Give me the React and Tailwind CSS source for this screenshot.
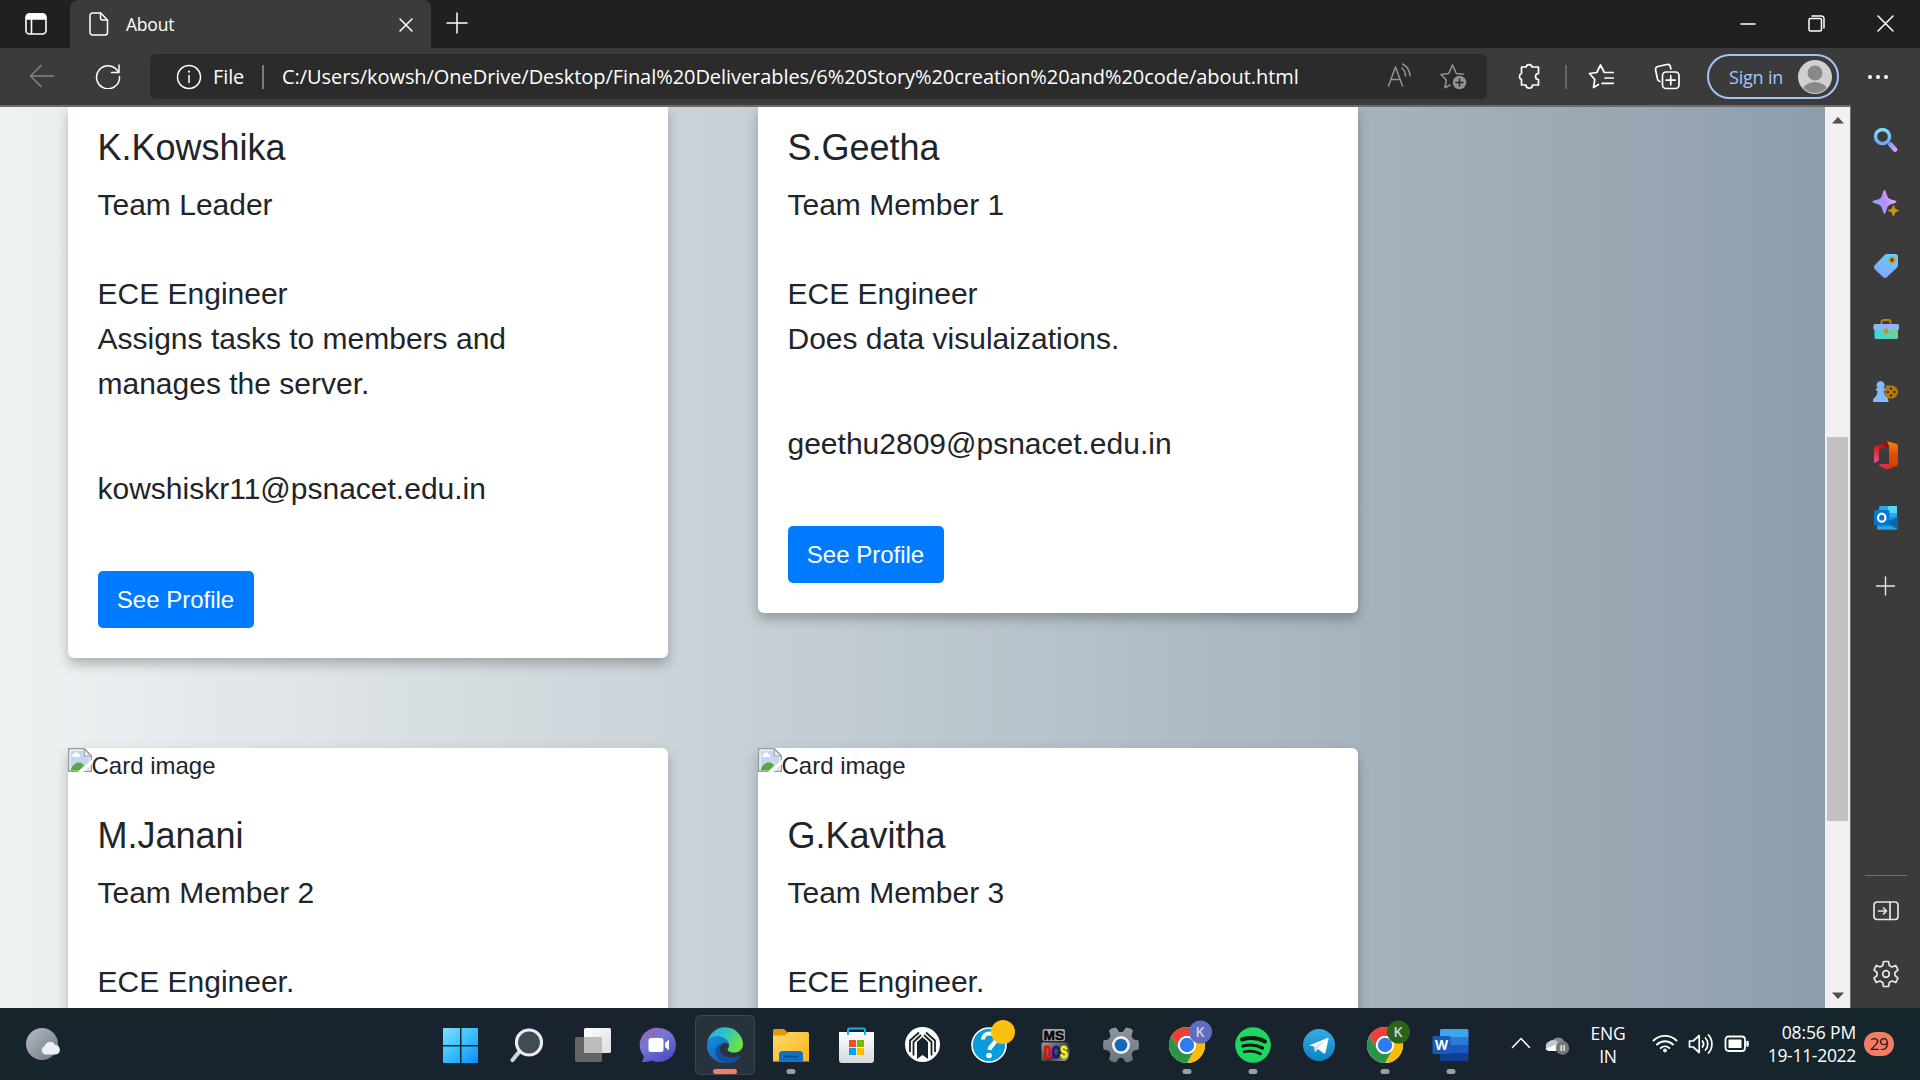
import React from 'react';

const UI = "font-['Open_Sans','Noto_Sans',sans-serif]";

function Line({ w = 24, h = 24, className = '', sw = 1.5, children }) {
  return (
    <svg
      width={w}
      height={h}
      viewBox={`0 0 ${w} ${h}`}
      fill="none"
      stroke="currentColor"
      strokeWidth={sw}
      strokeLinecap="round"
      strokeLinejoin="round"
      className={`block shrink-0 ${className}`}
    >
      {children}
    </svg>
  );
}

function TabStrip() {
  return (
    <div className="flex h-12 bg-[#202020] text-white">
      <div className="flex w-[70px] items-center pl-[25px]">
        <Line w={22} h={22} sw={1.6}>
          <rect x="1" y="1" width="20" height="20" rx="3.5" />
          <path d="M1.5 6V4a3 3 0 0 1 3-3h13a3 3 0 0 1 3 3v2z" fill="currentColor" />
          <path d="M6.5 6v14.5" />
        </Line>
      </div>
      <div className="flex h-12 w-[361px] items-center rounded-t-lg bg-[#3b3b3b] pl-[19px]">
        <Line w={20} h={24}>
          <path d="M3.5 1h8.2L18.5 8v12.5a2.5 2.5 0 0 1-2.500 2.500h-12.500a2.500 2.500 0 0 1-2.500-2.500v-17a2.500 2.500 0 0 1 2.500-2.500z" />
          <path d="M11.500 1v5a2 2 0 0 0 2 2h5" />
        </Line>
        <span className="-mt-px ml-[17px] w-[273px] text-[17.500px] leading-6 tracking-[-0.2px]">About</span>
        <Line w={14} h={14} className="mt-px">
          <path d="M1 1l12 12M13 1L1 13" />
        </Line>
      </div>
      <div className="flex flex-1 items-center pl-[15px]">
        <Line w={22} h={22} className="-mt-0.5">
          <path d="M11 1v20M1 11h20" />
        </Line>
      </div>
      <div className="flex items-center pr-[26px]">
        <Line w={16} h={16} className="-mt-px">
          <path d="M1 8h14" />
        </Line>
        <Line w={17} h={17} className="-mt-px ml-[52px]">
          <rect x="1" y="3.500" width="12.500" height="12.500" rx="1.500" />
          <path d="M4 1h9.500a2.500 2.500 0 0 1 2.500 2.500V13" />
        </Line>
        <Line w={17} h={17} className="-mt-px ml-[52px]">
          <path d="M1 1l15 15M16 1L1 16" />
        </Line>
      </div>
    </div>
  );
}

function Toolbar() {
  return (
    <div className="flex h-[57px] items-center bg-[#3b3b3b] text-white">
      <Line w={26} h={24} className="-mt-px ml-[29px] text-[#858585]">
        <path d="M24.500 12H1.500M12 1.500L1.500 12 12 22.500" />
      </Line>
      <Line w={26} h={26} className="-mt-px ml-[40px]" sw={1.5}>
        <path d="M23.500 9.500A11.500 11.500 0 1 0 24.500 13.500" />
        <path d="M24 2v7.500h-7.500" />
      </Line>
      <div className="ml-[29px] flex h-[45px] w-[1337px] items-center rounded-md bg-[#2b2b2b]">
        <Line w={26} h={26} className="ml-[26px]">
          <circle cx="13" cy="13" r="11.500" />
          <path d="M13 11.500v7" />
          <path d="M13 7.500v.3" strokeWidth="2" />
        </Line>
        <span className="ml-[11px] w-[49px] text-[20px] leading-7 tracking-[-0.1px]">File</span>
        <div className="h-6 w-0.5 bg-[#7d7d7d]" />
        <span className="ml-[18px] w-[1105px] whitespace-nowrap text-[20px] leading-7 tracking-[-0.06px]">
          C:/Users/kowsh/OneDrive/Desktop/Final%20Deliverables/6%20Story%20creation%20and%20code/about.html
        </span>
        <Line w={25} h={24} className="-mt-1 text-[#929292]">
          <path d="M1.500 23L8.500 4l7 19M4 16.500h9" />
          <path d="M15 5a11 11 0 0 1 3.500 8M15.500 1a14 14 0 0 1 7.500 12" />
        </Line>
        <Line w={27} h={27} className="ml-[28px] text-[#929292]" sw={1.6}>
          <path d="M10 22l-5 2.700 1.300-7.700L1 11.500l7.700-1L12.500 2l3.800 8.500 7.200.8" />
          <circle cx="19.500" cy="19.500" r="6.700" fill="currentColor" stroke="none" />
          <path d="M19.500 16v7M16 19.500h7" stroke="#2b2b2b" />
        </Line>
      </div>
      <Line w={26} h={28} className="-mt-px ml-[29px]" sw={1.7}>
        <path d="M5.500 5H10a3.200 3.200 0 0 1 6.200 0h6.300v6.500a3 3 0 0 0 0 6V23h-6a3.200 3.200 0 0 1-6.500 0H5.500v-5.500a3.200 3.200 0 0 1 0-6z" />
      </Line>
      <div className="ml-[23px] h-6 w-0.5 bg-[#666]" />
      <Line w={27} h={26} className="-mt-px ml-[21px]" sw={1.7}>
        <path d="M10.500 21.500l-5 3 1.300-8L1.500 10.500l7.300-1L12.500 2l3.800 7.500h9M17 15h8.300M14 20.300h11.300" />
      </Line>
      <Line w={27} h={27} className="ml-[39px]" sw={1.7}>
        <path d="M6 18.500a3 3 0 0 1-2.500-2.500L1.600 7a3 3 0 0 1 2.300-3.500l9-2a3 3 0 0 1 3.500 2.300l.5 2.200" />
        <rect x="8.500" y="9" width="16.500" height="16.500" rx="3.500" />
        <path d="M16.750 12.700v9M12.200 17.200h9" />
      </Line>
      <div className="ml-[26px] flex h-[45px] w-[132px] items-center rounded-full border-2 border-[#a5c3f5] pl-[20px]">
        <span className="w-[69px] text-[18px] leading-6 tracking-[-0.2px] text-[#a5c7ff]">Sign in</span>
        <svg width="34" height="34" viewBox="0 0 34 34" className="shrink-0">
          <defs>
            <clipPath id="avatar">
              <circle cx="17" cy="17" r="16" />
            </clipPath>
          </defs>
          <circle cx="17" cy="17" r="17" fill="#d2d0ce" />
          <g clipPath="url(#avatar)" fill="#8a8886">
            <circle cx="17" cy="13" r="7.500" />
            <ellipse cx="17" cy="31" rx="12.500" ry="9" />
          </g>
        </svg>
      </div>
      <svg width="22" height="6" viewBox="0 0 22 6" className="ml-[28px]" fill="#fff">
        <circle cx="3" cy="3" r="2" />
        <circle cx="11" cy="3" r="2" />
        <circle cx="19" cy="3" r="2" />
      </svg>
    </div>
  );
}

function BrokenImage() {
  return (
    <svg width="24" height="24" viewBox="0 0 24 24" className="block shrink-0">
      <path d="M.75.75h15.500L23.250 8v15.250H.75z" fill="#c6d6f5" stroke="#9b9b9b" strokeWidth="1.500" />
      <path d="M2 2h14v6h6v14H2z" fill="none" stroke="#fff" strokeWidth="1" />
      <path d="M5 9a2 2 0 0 1 1-3.500 2.500 2.500 0 0 1 4.500.5 1.700 1.700 0 0 1 1 3z" fill="#fff" />
      <path d="M2.500 22.500C4 17 8 14.500 11 14.500s4 2 5 3l-5 5z" fill="#5aa83a" />
      <path d="M16.250.75V8h7z" fill="#f2f2f2" stroke="#9b9b9b" strokeWidth="1.200" />
      <path d="M10 24L24 11.500V16l-8.500 8z" fill="#fff" />
    </svg>
  );
}

function Card({ name, role, lines, email, image }) {
  return (
    <div
      className={`w-[600px] bg-white text-[#212529] shadow-[0_6px_12px_rgba(0,0,0,0.25)] ${image ? 'rounded-t-[6px]' : 'rounded-b-[6px]'}`}
    >
      {image && (
        <div className="flex h-9 text-[24px] leading-9">
          <BrokenImage />
          <span className="-ml-[0.5px]">Card image</span>
        </div>
      )}
      <div className={image ? 'px-[29.500px] pt-[30px]' : 'px-[29.500px] pt-[19px] pb-[30px]'}>
        <h4 className="mb-[13px] text-[36px] leading-[43px]">{name}</h4>
        <p className="text-[30px] leading-[45px]">{role}</p>
        <div className="mt-[44px] w-[430px] text-[30px] leading-[45px]">
          {lines.map((l) => (
            <p key={l}>{l}</p>
          ))}
        </div>
        {email && <p className="mt-[60px] text-[30px] leading-[45px]">{email}</p>}
        {email && (
          <button className="mt-[60px] block h-[57px] w-[156px] rounded-[5px] bg-[#007bff] text-[24px] leading-9 text-white">
            See Profile
          </button>
        )}
      </div>
    </div>
  );
}

function Page() {
  return (
    <div className="h-[901px] w-[1825px] overflow-hidden bg-[linear-gradient(to_right,#eef2f3,#8e9eab)] pl-[68px] font-['Liberation_Sans',Arial,sans-serif]">
      <div className="flex h-[551px] items-start gap-[90px]">
        <Card
          name="K.Kowshika"
          role="Team Leader"
          lines={['ECE Engineer', 'Assigns tasks to members and manages the server.']}
          email="kowshiskr11@psnacet.edu.in"
        />
        <Card
          name="S.Geetha"
          role="Team Member 1"
          lines={['ECE Engineer', 'Does data visulaizations.']}
          email="geethu2809@psnacet.edu.in"
        />
      </div>
      <div className="mt-[90px] flex h-[400px] gap-[90px]">
        <Card name="M.Janani" role="Team Member 2" lines={['ECE Engineer.']} image />
        <Card name="G.Kavitha" role="Team Member 3" lines={['ECE Engineer.']} image />
      </div>
    </div>
  );
}

function Scrollbar() {
  return (
    <div className="flex w-[25px] flex-col items-center bg-[#f1f1f1]">
      <svg width="12" height="7" viewBox="0 0 12 7" className="mt-[10px]">
        <path d="M6 0l6 6.500H0z" fill="#505050" />
      </svg>
      <div className="mt-[313px] h-[384px] w-[21px] bg-[#c1c1c1]" />
      <svg width="12" height="7" viewBox="0 0 12 7" className="mt-[171px]">
        <path d="M0 .5h12L6 7z" fill="#505050" />
      </svg>
    </div>
  );
}

function Side({ children, h = 28, className = '' }) {
  return (
    <svg width="28" height={h} viewBox={`0 0 28 ${h}`} className={`block shrink-0 ${className}`} fill="none">
      {children}
    </svg>
  );
}

function Sidebar() {
  return (
    <div className="flex w-[69px] flex-col items-center bg-[#3b3b3b] text-[#e6e6e6]">
      <div className="mt-[21px] flex flex-col gap-[35px]">
        <Side>
          <defs>
            <linearGradient id="sGlass" x1="0" y1="0" x2="0" y2="1">
              <stop stopColor="#7fdcf3" />
              <stop offset="1" stopColor="#73a5ff" />
            </linearGradient>
            <linearGradient id="sHandle" x1="0" y1="0" x2="1" y2="1">
              <stop stopColor="#8e9bff" />
              <stop offset="1" stopColor="#dca0f5" />
            </linearGradient>
          </defs>
          <circle cx="10.500" cy="10.500" r="7" stroke="url(#sGlass)" strokeWidth="3.400" />
          <path d="M18.500 18.500l4.500 5" stroke="url(#sHandle)" strokeWidth="4.800" strokeLinecap="round" />
        </Side>
        <Side>
          <defs>
            <linearGradient id="sSpark" x1="0" y1=".6" x2="1" y2=".3">
              <stop stopColor="#6fb3ff" />
              <stop offset=".5" stopColor="#bb8cff" />
              <stop offset="1" stopColor="#e8b5ff" />
            </linearGradient>
          </defs>
          <path d="M12.500 1c1.500 0 2 6 4 8s8 2.300 8 3.800-6 2-8 4-2.500 8-4 8-2-6-4-8-8-2.500-8-4 6-1.800 8-3.800 2.500-8 4-8z" fill="url(#sSpark)" />
          <path d="M21.500 16c.9 0 1 2.800 1.900 3.700s3.600.9 3.600 1.800-2.700 1-3.600 1.900-1 3.600-1.900 3.600-1-2.700-1.900-3.600-3.600-1-3.600-1.900 2.700-.9 3.600-1.800 1-3.700 1.900-3.700z" fill="#c9960c" />
        </Side>
        <Side>
          <defs>
            <linearGradient id="sTag" x1=".8" y1="0" x2=".3" y2="1">
              <stop stopColor="#63cdf7" />
              <stop offset="1" stopColor="#85a5fb" />
            </linearGradient>
          </defs>
          <path d="M15 2h8.500A2.500 2.500 0 0 1 26 4.500V13a4 4 0 0 1-1.200 2.800L15 25a3 3 0 0 1-4 0l-8-7.500a3 3 0 0 1 0-4.500L12.500 3A4 4 0 0 1 15 2z" fill="url(#sTag)" />
          <circle cx="20" cy="8" r="2.300" stroke="#d68a00" strokeWidth="1.800" fill="#3a3020" />
        </Side>
        <Side>
          <defs>
            <linearGradient id="sBox" x1="0" y1="0" x2="1" y2="0">
              <stop stopColor="#3ed6e0" />
              <stop offset="1" stopColor="#6fd08c" />
            </linearGradient>
          </defs>
          <path d="M9.500 9.500V7a2 2 0 0 1 2-2h5a2 2 0 0 1 2 2v2.500" stroke="#b5871b" strokeWidth="1.800" />
          <rect x="2.500" y="12" width="23.500" height="12" rx="1.500" fill="url(#sBox)" />
          <rect x="1.500" y="9" width="25.500" height="6" rx="1.500" fill="#8fb4fb" />
          <rect x="12" y="13.500" width="4.500" height="5" rx="2" fill="#c98f1b" />
        </Side>
        <Side>
          <path d="M14 7.500h5.500a6.500 6.500 0 0 1 0 13H12z" fill="#b37b0e" />
          <g fill="#4a3411">
            <circle cx="19" cy="10.500" r="1.300" />
            <circle cx="19" cy="17.500" r="1.300" />
            <circle cx="15.800" cy="14" r="1.300" />
            <circle cx="22.500" cy="14" r="1.300" />
          </g>
          <path d="M8.500 3a4.300 4.300 0 0 1 3 7.300h2v2.500h-1.700c.2 3 1 5.200 3 6.700 1.500 1 1.700 2.500 1.700 4.500H1c0-2 .2-3.500 1.700-4.500 2-1.500 2.700-3.700 2.900-6.700H4v-2.500h1.700A4.300 4.300 0 0 1 8.500 3z" fill="#85bbfc" />
        </Side>
        <Side>
          <defs>
            <linearGradient id="sOffL" x1="0" y1="1" x2=".6" y2="0">
              <stop stopColor="#e05aa8" />
              <stop offset=".5" stopColor="#d92b38" />
              <stop offset="1" stopColor="#8e1015" />
            </linearGradient>
            <linearGradient id="sOffR" x1="0" y1="0" x2="0" y2="1">
              <stop stopColor="#f58a00" />
              <stop offset=".5" stopColor="#e04a00" />
              <stop offset="1" stopColor="#d63600" />
            </linearGradient>
          </defs>
          <path d="M16 0L4 5a3 3 0 0 0-2 3v14l5-2.500V8.500L17 5z" fill="url(#sOffL)" />
          <path d="M7 23h10v5h-3c-3-1-7-3-7-5z" fill="#e02b4e" />
          <path d="M15 .2L23.500 2.500A3 3 0 0 1 26 5.500v17a3 3 0 0 1-2.500 3L15 28l2-5V5z" fill="url(#sOffR)" />
        </Side>
        <Side>
          <rect x="7" y="2" width="18" height="14" rx="1.500" fill="#28a8ea" />
          <path d="M16 2h9v7h-9z" fill="#50d9ff" />
          <path d="M5 13h12l9 0v11a1.500 1.500 0 0 1-1.500 1.500h-18A1.500 1.500 0 0 1 5 24z" fill="#1490df" />
          <path d="M26 13v12L14 18.500z" fill="#0f64ad" />
          <path d="M5 22.500h13l7 3H6.500A1.500 1.500 0 0 1 5 24z" fill="#28a8ea" />
          <rect x="2" y="6" width="15.500" height="15.500" rx="1.500" fill="#0078d4" />
          <ellipse cx="9.750" cy="13.700" rx="3.700" ry="4" stroke="#fff" strokeWidth="2.200" />
        </Side>
      </div>
      <Line w={20} h={20} className="mt-[44px]" sw={1.400}>
        <path d="M9.500 1v18M.5 10h18" />
      </Line>
      <div className="mt-[279px] h-px w-[42px] bg-[#707070]" />
      <Line w={26} h={20} className="mt-[25px]" sw={1.700}>
        <rect x="1" y="1" width="24" height="17.500" rx="3" />
        <path d="M17 1v17.500M5.500 10h8M10.500 7l3 3-3 3" />
      </Line>
      <Line w={26} h={28} className="mt-[39px]" sw={1.700}>
        <path d="M10.500 1.500h5l.8 4 2.700 1.500 3.700-1.500 2.300 4.300L22 12.500v3l3 2.700-2.300 4.300L19 21l-2.700 1.500-.8 4h-5l-.8-4L7 21l-3.700 1.500L1 18.200l3-2.700v-3L1 9.800l2.300-4.300L7 7l2.700-1.500z" />
        <circle cx="13" cy="14" r="3.300" />
      </Line>
    </div>
  );
}

function TaskItem({ children, running, active }) {
  return (
    <div className="relative flex h-[72px] w-[66px] shrink-0 items-center justify-center">
      {active && <div className="absolute top-[7px] left-[3px] h-[60px] w-[60px] rounded-md border border-white/10 bg-white/[0.07]" />}
      <svg width="66" height="72" viewBox="0 0 66 72" className="relative block" fill="none">
        {children}
        {running && <rect x="28.500" y="61" width="9" height="5" rx="2.500" fill="#9a9fa3" />}
        {active && <rect x="21" y="61" width="24" height="5" rx="2.500" fill="#f47c64" />}
      </svg>
    </div>
  );
}

function Chrome({ badge }) {
  return (
    <>
      <circle cx="33" cy="37" r="18" fill="#fff" />
      <path d="M33 28h15.600A18 18 0 0 0 17.400 28L25.200 41.500A9 9 0 0 1 33 28z" fill="#ea4335" />
      <path d="M40.800 41.500L33 55A18 18 0 0 0 48.600 28H33a9 9 0 0 1 7.800 13.500z" fill="#fbbc05" />
      <path d="M25.200 41.500L17.400 28A18 18 0 0 0 33 55l7.800-13.500a9 9 0 0 1-15.600 0z" fill="#2b9446" />
      <circle cx="33" cy="37" r="9" fill="#fff" />
      <circle cx="33" cy="37" r="7.200" fill="#2f7bf0" />
      <circle cx="46.500" cy="24" r="11.500" fill={badge} />
      <text x="46" y="29" textAnchor="middle" fontSize="14" fontWeight="600" fill="#d0d3e4" fontFamily="Open Sans, sans-serif">
        K
      </text>
    </>
  );
}

function TaskIcons() {
  return (
    <>
      <TaskItem>
        <defs>
          <linearGradient id="win" x1="0" y1="0" x2="50" y2="55" gradientUnits="userSpaceOnUse">
            <stop offset=".35" stopColor="#7fdcff" />
            <stop offset=".6" stopColor="#44c8ff" />
            <stop offset="1" stopColor="#0a90f8" />
          </linearGradient>
        </defs>
        <path d="M16 20h16v17H15V21a1 1 0 0 1 1-1zM33.500 20H49a1 1 0 0 1 1 1v16H33.500zM15 38.500h17V55H16a1 1 0 0 1-1-1zM33.500 38.500H50V54a1 1 0 0 1-1 1H33.500z" fill="url(#win)" />
      </TaskItem>
      <TaskItem>
        <path d="M25.500 43.500l-7 8.500" stroke="#d3d3d3" strokeWidth="4.200" strokeLinecap="round" />
        <circle cx="35" cy="34.500" r="12.500" fill="#3f4b55" stroke="#ececec" strokeWidth="3.200" />
      </TaskItem>
      <TaskItem>
        <defs>
          <linearGradient id="tv" x1="0" y1="0" x2="1" y2="1">
            <stop stopColor="#fff" />
            <stop offset="1" stopColor="#ddd" />
          </linearGradient>
        </defs>
        <rect x="15" y="29" width="27" height="25" rx="1.500" fill="#656565" />
        <rect x="24" y="20" width="27" height="25" rx="1.500" fill="url(#tv)" />
        <path d="M24 29h18v16H25a1 1 0 0 1-1-1z" fill="#bcbcbc" />
      </TaskItem>
      <TaskItem>
        <defs>
          <linearGradient id="chat" x1="0" y1="0" x2=".6" y2="1">
            <stop stopColor="#a0609c" />
            <stop offset=".45" stopColor="#7478d8" />
            <stop offset="1" stopColor="#5050c4" />
          </linearGradient>
        </defs>
        <path d="M33 20a17 17 0 1 1-7 32.500c-3 1-6 1.500-10 1.500 1-2 1.500-4 1.800-6A17 17 0 0 1 33 20z" fill="url(#chat)" />
        <rect x="22.500" y="30" width="15" height="14" rx="2.500" fill="#fff" />
        <path d="M39 35l4-3.500v11L39 39z" fill="#fff" />
      </TaskItem>
      <TaskItem active>
        <defs>
          <linearGradient id="edgeTop" x1="0" y1="0" x2="1" y2=".4">
            <stop stopColor="#2aa5e8" />
            <stop offset=".5" stopColor="#2bc4c8" />
            <stop offset="1" stopColor="#6ee04a" />
          </linearGradient>
          <linearGradient id="edgeLow" x1="0" y1="0" x2=".8" y2="1">
            <stop stopColor="#1390e0" />
            <stop offset="1" stopColor="#1258a8" />
          </linearGradient>
        </defs>
        <path d="M15.200 35A18 18 0 0 1 51 36c0 6-4.500 8.500-9 8.500-4 0-6.500-1.500-6.500-3 0-1 1.500-1.500 1.500-4 0-4-5-9-12-9-5 0-8.500 3-9.800 6.500z" fill="url(#edgeTop)" />
        <path d="M15 37c.5-5.500 5.500-8.800 10.500-8.800 7 0 11.500 4.800 11.500 8.500-2-3-8.500-2.500-9.500 3.300C26.700 46 32 51 39 51c4 0 7-1.500 9-2.800C45 52.500 39.500 55 33 55c-10 0-18.500-8-18-18z" fill="url(#edgeLow)" />
        <path d="M28.500 36.500c-2.500 7 2.500 13 11 13 3 0 5.500-.8 7.500-1.800 1-.5 1.800.3 1.200 1.200C45 53.500 39 55.500 34 55c-8-1-12-9-10-14 .8-2.300 2.500-4 4.500-4.500z" fill="#12509b" />
      </TaskItem>
      <TaskItem running>
        <defs>
          <linearGradient id="folder" x1="0" y1="0" x2="1" y2="1">
            <stop stopColor="#ffd96a" />
            <stop offset="1" stopColor="#f8b41a" />
          </linearGradient>
        </defs>
        <path d="M16.500 21H26l4 4-4 3H15v-5.500a1.500 1.500 0 0 1 1.500-1.500z" fill="#e09b06" />
        <path d="M15 27.500h11.500l4-3.500h19a1.500 1.500 0 0 1 1.500 1.500V53.500H15z" fill="url(#folder)" />
        <path d="M21 53.500v-7a3.500 3.500 0 0 1 3.500-3.500h17a3.500 3.500 0 0 1 3.500 3.500v7z" fill="#0f70c4" />
        <path d="M26 48.500h14" stroke="#0a4a94" strokeWidth="1.600" />
      </TaskItem>
      <TaskItem>
        <defs>
          <linearGradient id="bag" x1="0" y1="0" x2="0" y2="1">
            <stop stopColor="#fff" />
            <stop offset="1" stopColor="#d8d8d8" />
          </linearGradient>
        </defs>
        <path d="M15 24h35v28a3 3 0 0 1-3 3H18a3 3 0 0 1-3-3z" fill="url(#bag)" />
        <path d="M24 27v-5a1.500 1.500 0 0 1 1.500-1.500h14A1.500 1.500 0 0 1 41 22v5" stroke="#23a8e8" strokeWidth="2" />
        <path d="M25 32h7v7h-7z" fill="#f25022" />
        <path d="M33 32h7v7h-7z" fill="#7fba00" />
        <path d="M25 40h7v7h-7z" fill="#00a4ef" />
        <path d="M33 40h7v7h-7z" fill="#ffb900" />
      </TaskItem>
      <TaskItem>
        <circle cx="32.500" cy="36.500" r="17.500" fill="#fff" />
        <path d="M20 44V32.500l9-8M23.500 47.500V34l7.500-7M45 44V32.500l-9-8M41.500 47.500V34L34 27" stroke="#17242c" strokeWidth="1.800" />
        <path d="M27 51V34l5.500-5 5.500 5v17l-5.500-4z" fill="#17242c" />
      </TaskItem>
      <TaskItem>
        <circle cx="33" cy="37" r="17" fill="#0a9bdc" stroke="#fff" strokeWidth="1.600" />
        <path d="M27 31.500c0-4 3-6 6.500-6s6.500 2 6.500 5.500c0 5-5.500 5-6.500 11" stroke="#fff" strokeWidth="4.200" />
        <circle cx="33" cy="47.500" r="2.800" fill="#fff" />
        <circle cx="47" cy="24" r="12" fill="#fec010" />
      </TaskItem>
      <TaskItem>
        <defs>
          <linearGradient id="plate" x1="0" y1="0" x2="1" y2="1">
            <stop stopColor="#a3a3a3" />
            <stop offset=".6" stopColor="#3c3c3c" />
            <stop offset="1" stopColor="#b0b0b0" />
          </linearGradient>
        </defs>
        <rect x="20.500" y="21" width="22.500" height="12" rx="2" fill="#a2a2a2" />
        <text x="21.500" y="31.500" fontSize="13" fontWeight="700" textLength="20.500" lengthAdjust="spacingAndGlyphs" fill="#000" stroke="#000" strokeWidth=".5" fontFamily="Liberation Sans, sans-serif">
          MS
        </text>
        <path d="M21 34.500h21c4 0 5.500 3 5.500 8s-1.500 10.500-5.500 10.500H21a1.500 1.500 0 0 1-1.500-1.500V36a1.500 1.500 0 0 1 1.500-1.500z" fill="url(#plate)" />
        <text x="22" y="50" textLength="23.500" lengthAdjust="spacingAndGlyphs" fontSize="17" fontWeight="700" strokeWidth="1.200" fontFamily="Liberation Sans, sans-serif">
          <tspan fill="#f00c0c" stroke="#f00c0c">D</tspan>
          <tspan fill="#15158c" stroke="#15158c">O</tspan>
          <tspan fill="#f6f210" stroke="#f6f210">S</tspan>
        </text>
      </TaskItem>
      <TaskItem>
        <defs>
          <linearGradient id="gear" x1="0" y1="0" x2="0" y2="1">
            <stop stopColor="#8f979f" />
            <stop offset="1" stopColor="#6a737c" />
          </linearGradient>
        </defs>
        <path d="M23.500 20.500l4.500-1 3.200 4.500h3.600L38 19.500l4.500 1 2.500 2-1.500 5.500 1.800 3.200 5.200 1.300.5 4.500-.5 4.500-5.200 1.300-1.800 3.200 1.500 5.500-2.500 2-4.500 1-3.200-4.500h-3.600L28 54.500l-4.500-1-2.500-2 1.500-5.500-1.800-3.200-5.200-1.300L15 37l.5-4.500 5.200-1.300 1.800-3.200-1.500-5.500z" fill="url(#gear)" />
        <circle cx="33" cy="37" r="9" fill="#f1f1f1" />
        <circle cx="33" cy="37" r="6.300" fill="#1268bb" />
      </TaskItem>
      <TaskItem running>
        <Chrome badge="#5f6cc0" />
      </TaskItem>
      <TaskItem running>
        <circle cx="33" cy="37" r="17.800" fill="#1ed760" />
        <path d="M22 31.500c8-2.300 16.500-1.500 23 2" stroke="#0b1a12" strokeWidth="4" strokeLinecap="round" />
        <path d="M23 38c7-1.800 14-1 19.500 2" stroke="#0b1a12" strokeWidth="3.200" strokeLinecap="round" />
        <path d="M24 43.800c6-1.300 12-.7 16.500 2" stroke="#0b1a12" strokeWidth="2.700" strokeLinecap="round" />
      </TaskItem>
      <TaskItem>
        <defs>
          <linearGradient id="tg" x1="0" y1="0" x2="0" y2="1">
            <stop stopColor="#35ade1" />
            <stop offset="1" stopColor="#0d82c2" />
          </linearGradient>
        </defs>
        <circle cx="33" cy="37" r="16" fill="url(#tg)" />
        <path d="M23 37.500L41.500 30c.8-.3 1.300.3 1 1.200l-3 13.300c-.3 1.200-1 1.300-2 .7L32 41l-3 3-1-5.500z" fill="#fff" />
        <path d="M28.500 39.500L38.500 33l-8 8-1.500 3z" fill="#bcdcf0" />
      </TaskItem>
      <TaskItem running>
        <Chrome badge="#2c6417" />
      </TaskItem>
      <TaskItem running>
        <path d="M23.500 21h25.500a1.500 1.500 0 0 1 1.500 1.500V29H22v-6.500a1.500 1.500 0 0 1 1.500-1.500z" fill="#41a5ee" />
        <path d="M22 29h28.500v8H22z" fill="#2b7cd3" />
        <path d="M22 37h28.500v8H22z" fill="#185abd" />
        <path d="M22 45h28.500v6.500A1.500 1.500 0 0 1 49 53H23.500a1.500 1.500 0 0 1-1.500-1.500z" fill="#103f91" />
        <rect x="14.500" y="28" width="18" height="18" rx="1.500" fill="#185abd" />
        <text x="23.500" y="42" textAnchor="middle" fontSize="13.500" fontWeight="700" fill="#fff" fontFamily="Open Sans, sans-serif">
          W
        </text>
      </TaskItem>
    </>
  );
}

function Taskbar() {
  return (
    <div className="flex h-[72px] items-center bg-[linear-gradient(to_right,#16262b,#18232f_30%,#17242c_60%,#1a2230_78%,#14262b)] text-white">
      <div className="w-[428px] pl-[25px]">
        <svg width="36" height="36" viewBox="0 0 36 36">
          <defs>
            <linearGradient id="moon" x1="0" y1="0" x2="1" y2="1">
              <stop stopColor="#b4bbc4" />
              <stop offset="1" stopColor="#727a84" />
            </linearGradient>
          </defs>
          <circle cx="17" cy="18" r="16" fill="url(#moon)" />
          <path d="M20 28.500a4.500 4.500 0 0 1-.3-8.500 5.500 5.500 0 0 1 10.300-1 4.800 4.800 0 0 1 1 9.500z" fill="#eef0f3" />
        </svg>
      </div>
      <TaskIcons />
      <Line w={20} h={12} className="ml-[27px] -mt-0.5">
        <path d="M1.500 10.500L10 1.500l8.500 9" />
      </Line>
      <svg width="26" height="22" viewBox="0 0 26 22" className="ml-[13px] mt-0.5">
        <path d="M8 8a6.500 6.500 0 0 1 12-1 5 5 0 0 1 1 9H6z" fill="#84898d" />
        <path d="M5.500 17A5 5 0 0 1 5 7.500 7 7 0 0 1 14 8l4 9z" fill="#c6c9cb" />
        <path d="M1.500 14.500L11 11l5 6H5a4 4 0 0 1-3.500-2.500z" fill="#fff" />
        <circle cx="18.500" cy="14" r="6.700" fill="#777" />
        <path d="M17.200 11v6M20 11v6" stroke="#fff" strokeWidth="1.300" />
      </svg>
      <div className="mt-px ml-[9px] w-[58px] text-center text-[17.500px] leading-[22.500px] tracking-[-0.2px]">
        <div>ENG</div>
        <div>IN</div>
      </div>
      <Line w={26} h={20} className="ml-[15px] -mt-0.5" sw={1.900}>
        <path d="M1.500 7.500a16.500 16.500 0 0 1 23 0M5 11.500a11.500 11.500 0 0 1 16 0M8.700 15a6.500 6.500 0 0 1 8.600 0" />
        <circle cx="13" cy="17.500" r="1.500" fill="currentColor" strokeWidth="1" />
      </Line>
      <Line w={26} h={22} className="ml-[10px] -mt-px" sw={1.700}>
        <path d="M1.500 8v6h3.700l6 5.500V2.500l-6 5.500z" />
        <path d="M14.500 8a5 5 0 0 1 0 6M17.500 5a9 9 0 0 1 0 12M20.500 2a13.500 13.500 0 0 1 0 18" />
      </Line>
      <Line w={26} h={18} className="ml-[10px]" sw={1.800}>
        <rect x="1.500" y="1.500" width="19.500" height="14.500" rx="3" />
        <rect x="4.500" y="4.500" width="13" height="8.500" rx=".5" fill="currentColor" stroke="none" />
        <path d="M23.500 7v3.500" strokeWidth="2.500" />
      </Line>
      <div className="ml-[6px] w-[100px] whitespace-nowrap text-right text-[17.500px] leading-[22.500px] tracking-[-0.3px]">
        <div className="-mt-px tracking-[-0.15px]">08:56 PM</div>
        <div>19-11-2022</div>
      </div>
      <div className="ml-[8px] flex h-6 w-[30px] items-center justify-center rounded-full bg-[#f47c64] text-[17px] leading-6 tracking-[-0.4px] text-[#1a1a1a]">
        29
      </div>
    </div>
  );
}

export default function App() {
  return (
    <div className={`h-[1080px] w-[1920px] overflow-hidden bg-[#3b3b3b] ${UI}`}>
      <TabStrip />
      <Toolbar />
      <div className="flex h-[903px]">
        <div className="flex w-[1851px] border-t-2 border-r border-[#6b6b6b]">
          <Page />
          <Scrollbar />
        </div>
        <Sidebar />
      </div>
      <Taskbar />
    </div>
  );
}
